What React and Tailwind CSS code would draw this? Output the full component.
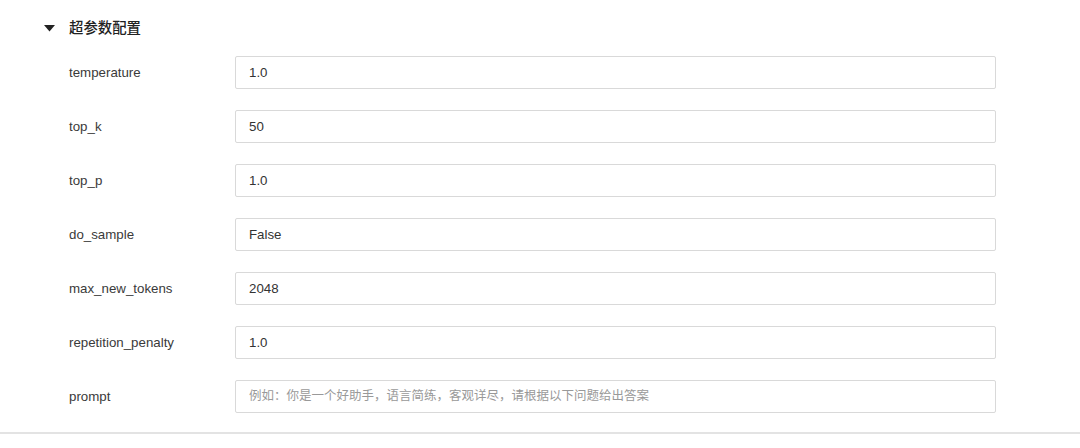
import React from "react";

const rows = [
  ["temperature", "1.0"],
  ["top_k", "50"],
  ["top_p", "1.0"],
  ["do_sample", "False"],
  ["max_new_tokens", "2048"],
  ["repetition_penalty", "1.0"],
];

export default function App() {
  return (
    <div
      className="w-[1080px] h-[448px] bg-white text-[#333] overflow-hidden"
      style={{ fontFamily: '"Liberation Sans", "Noto Sans CJK SC", sans-serif' }}
    >
      <div className="flex items-center h-[28px] pt-[14px] pl-[44px] box-content">
        <svg width="11" height="7" viewBox="0 0 11 7" className="mr-[14px]">
          <polygon points="0,0 11,0 5.5,6.5" fill="#222" />
        </svg>
        <span className="text-[14.4px] font-medium text-[#222] leading-none">超参数配置</span>
      </div>
      <div className="flex flex-col gap-[21px] pl-[69px] pt-[14px]">
        {rows.map(([label, value]) => (
          <div key={label} className="flex items-center">
            <div className="w-[166px] text-[13.3px] text-[#3a3a3a]">{label}</div>
            <div className="w-[761px] h-[33px] border border-[#d9d9d9] rounded-[2px] flex items-center pl-[13px] text-[13.3px] text-[#333]">
              {value}
            </div>
          </div>
        ))}
        <div className="flex items-center">
          <div className="w-[166px] text-[13.3px] text-[#3a3a3a]">prompt</div>
          <div className="w-[761px] h-[33px] border border-[#d9d9d9] rounded-[2px] flex items-center pl-[13px] text-[12.5px] text-[#999]">
            例如：你是一个好助手，语言简练，客观详尽，请根据以下问题给出答案
          </div>
        </div>
      </div>
      <div className="mt-[19px] h-[2px] bg-[#e3e3e3]" />
    </div>
  );
}
